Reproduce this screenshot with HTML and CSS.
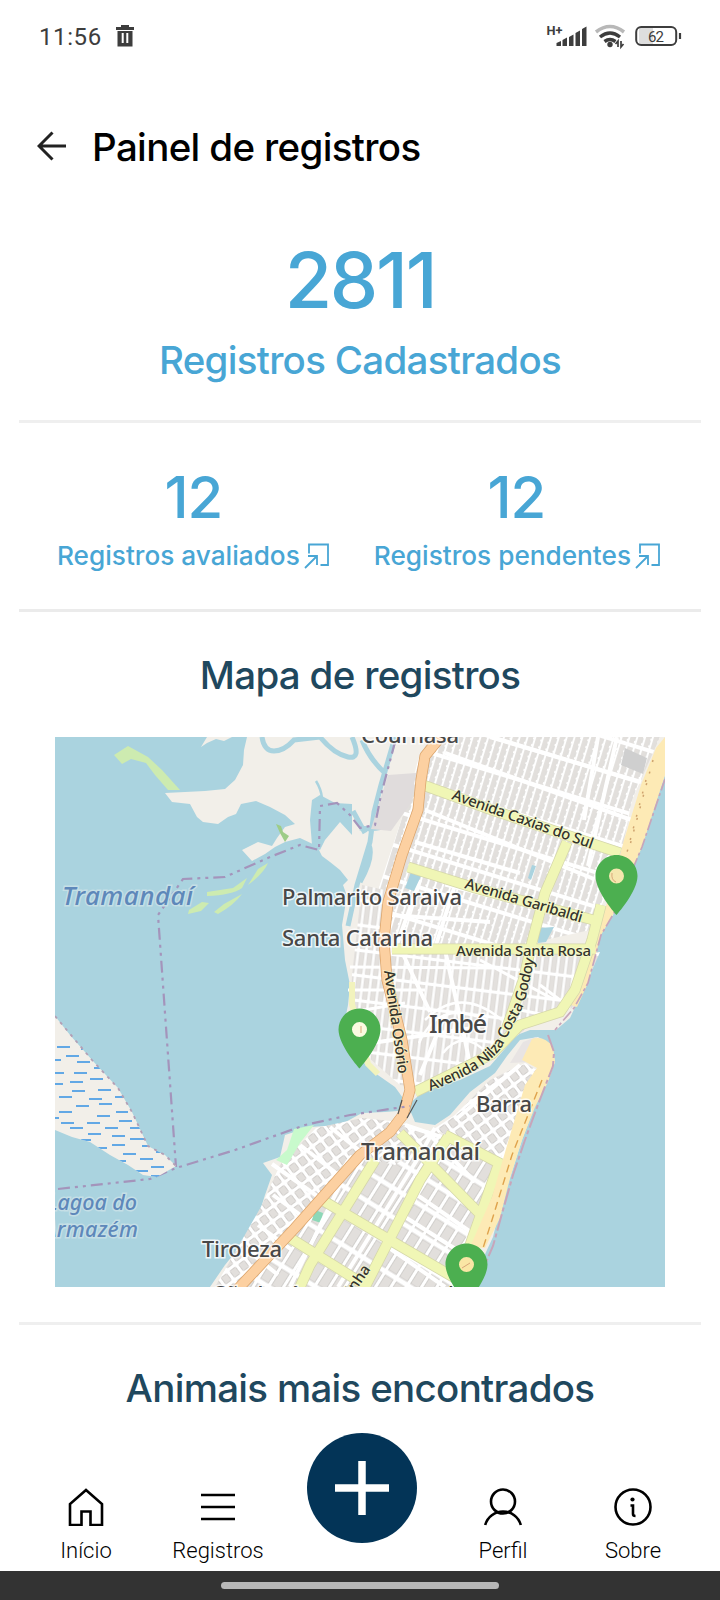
FILE: index.html
```html
<!DOCTYPE html>
<html lang="pt-BR">
<head>
<meta charset="utf-8">
<meta name="viewport" content="width=device-width, initial-scale=1">
<title>Painel de registros</title>
<link rel="stylesheet" href="styles.css">
</head>
<body>
<div class="screen">
  <div class="status">
    <span class="clock">11:56</span>
    <svg class="trash" width="20" height="22" viewBox="0 0 20 22"><path fill="#3d3d3d" d="M6 0h8v2h5v3H1V2h5zM2.500 6h15v15.500h-15z"/><path stroke="#fff" stroke-width="2" d="M7.700 8v10M12.300 8v10"/></svg>
    <svg class="signals" width="140" height="30" viewBox="545 20 140 30">
      <text x="546.500" y="34.500" class="net" textLength="16" lengthAdjust="spacingAndGlyphs">H+</text>
      <g fill="#3d3d3d"><path d="M556.500 46v-3l4.500-2v5zM562.500 46v-6l4.500-2.500v8.500zM569 46v-9l4.500-2.500v11.500zM575.500 46V33l4.500-2.500v15.500zM582 46V29l4.500-2.500V46z"/></g>
      <g fill="none" stroke-width="3.500"><path stroke="#b8b8b8" d="M596 32q14-11 28 0"/><path stroke="#3d3d3d" d="M600 37q10-8 20 0M604.500 41.500q5.500-4 11 0"/></g>
      <circle cx="610" cy="44.500" r="2.700" fill="#3d3d3d"/>
      <path d="M618 47v-6l-2.500 3M621 41v6l2.500-3" fill="none" stroke="#3d3d3d" stroke-width="1.700"/>
      <rect x="639" y="28" width="14" height="16" fill="#dedede"/>
      <rect x="636.200" y="27" width="40" height="18" rx="5" fill="none" stroke="#3d3d3d" stroke-width="2"/>
      <path d="M680 33v6" stroke="#3d3d3d" stroke-width="2.200"/>
      <text x="648" y="41.500" class="level" textLength="16">62</text>
    </svg>
  </div>

  <header class="header">
    <svg width="30" height="30" viewBox="0 0 30 30" fill="none" stroke="#222" stroke-width="3"><path d="M15.500 1.500 2 15l13.500 13.500M2 15h27"/></svg>
    <h1 class="title">Painel de registros</h1>
  </header>

  <main class="content">
    <section class="total">
      <div class="total-number">2811</div>
      <div class="total-label">Registros Cadastrados</div>
    </section>

    <section class="split">
      <div class="stat stat-done">
        <div class="stat-number">12</div>
        <div class="stat-label"><span>Registros avaliados</span><svg width="26" height="26" viewBox="0 0 26 26"><path d="M5 10.500V1.500h19v20.500h-7.500M1 25 12 14M4 13h9v9" fill="none" stroke="#48a6d5" stroke-width="1.800"/></svg></div>
      </div>
      <div class="stat stat-pending">
        <div class="stat-number">12</div>
        <div class="stat-label"><span>Registros pendentes</span><svg width="26" height="26" viewBox="0 0 26 26"><path d="M5 10.500V1.500h19v20.500h-7.500M1 25 12 14M4 13h9v9" fill="none" stroke="#48a6d5" stroke-width="1.800"/></svg></div>
      </div>
    </section>

    <section class="map-section">
      <h2 class="heading heading-map">Mapa de registros</h2>
      <svg class="map" width="610" height="550" viewBox="55 737 610 550">
        <defs>
          <pattern id="fine" width="7.500" height="33" patternUnits="userSpaceOnUse" patternTransform="rotate(17)"><rect width="7.500" height="33" fill="#fff"/><rect x="1" y="2" width="4.600" height="29" fill="#e2dfdc"/><path d="M6 2v29" stroke="#d0cecc" stroke-width=".7" stroke-dasharray="5 2"/></pattern>
          <pattern id="level" width="8" height="25" patternUnits="userSpaceOnUse" patternTransform="rotate(7)"><rect width="8" height="25" fill="#fff"/><rect x="1" y="1.500" width="5" height="21" fill="#e3e0dd" stroke="#cfcdca" stroke-width=".4"/></pattern>
          <pattern id="blocks" width="13" height="25" patternUnits="userSpaceOnUse" patternTransform="rotate(32)"><rect width="13" height="25" fill="#fff"/><rect x="1.500" y="2" width="9" height="19" fill="#e2dfdc" stroke="#cac7c4" stroke-width=".8"/></pattern>
          <pattern id="small" width="11" height="12" patternUnits="userSpaceOnUse" patternTransform="rotate(-37)"><rect width="11" height="12" fill="#fff"/><rect x="1.500" y="1.500" width="7" height="8" rx="1" fill="#e2dfdc" stroke="#cac7c4" stroke-width=".8"/></pattern>
          <path id="nilza" d="M430 1091Q492 1068 504 1043Q513 1025 524 1005L536 953"/>
          <path id="pin" fill="#4caf50" fill-rule="evenodd" d="M12 2C8.130 2 5 5.130 5 9c0 5.250 7 13 7 13s7-7.750 7-13c0-3.870-3.130-7-7-7zm0 9.500a2.500 2.500 0 1 1 0-5 2.500 2.500 0 0 1 0 5z"/>
          <clipPath id="wet"><path d="M55 1016 70 1035 92 1060 118 1088 132 1112 148 1146 165 1155 176 1166 157 1177 143 1175 128 1165 110 1155 90 1142 72 1137 55 1130z"/></clipPath>
        </defs>
        <rect x="55" y="737" width="610" height="550" fill="#aad3df"/>

        <!-- north shore and peninsula -->
        <path fill="#f2efe9" d="M201 747 207 737h25l-8 4-8-2-9 4zM247 737 244 750 243 765 235 780 225 789 205 791 185 792 165 793 172 802 190 804 197 817 203 822 218 824 228 817 236 814 241 804 256 801 270 807 285 815 295 824 285 827 277 838 272 846 258 842 242 850 252 861 265 854 275 847 285 842 300 838 317 846 322 856 330 862 340 870 348 880 343 885 347 896 342 925 345 960 350 985 348 1005 345 1020 350 1050 375 1073 395 1087 408 1105 425 1090 460 1080 490 1066 503 1051 517 1035 530 1030 556 1030 570 1018 583 990 592 965 600 935 613 915 640 845 665 775V737z"/>
        <path fill="#aad3df" d="M320 795 335 803 352 804 352 835 340 822 325 840 320 850 312 845 310 820 312 800z"/>
        <path fill="none" stroke="#aad3df" stroke-width="5" d="M262 737q2 14 12 14t20-11l26-3q14 17 28 20t4-20M353 811l12 22M362 740q8 20 24 34M395 737 381 785 374 812 370 842 357 885 348 926M405 790q-2 25-14 33t-31 5M369 845q5 12-9 37"/>
        <path fill="none" stroke="#aad3df" stroke-width="2.500" d="M316 781q5 8 6 17"/>
        <path fill="#cdebb0" d="M114 755 128 746 148 757 162 770 180 790 168 790 155 775 146 763 131 759 122 764zM207 892l26-4 14-10-5 10q-10 7-35 8zM248 885l10-16 10-6q-4 10-20 22zM189 910l13-8 7 1-8 8-13 3zM214 912l10-8 18-10q-8 11-24 20z"/>
        <path fill="#9dcc87" d="M276 824l5 2 2 6 6 4-4 6-5-9z"/>

        <!-- street grids of Imbé -->
        <path fill="url(#fine)" d="M430 737H660L632 800 618 870 590 930 500 950 430 948 360 948 378 890 408 800 418 760z"/>
        <path fill="url(#level)" d="M362 885 385 890 380 948 600 952 590 975 572 1008 540 1018 505 1045 430 1088 400 1085 360 1050 350 1020 352 975z"/>
        <path fill="#e0dcdc" d="M388 775l28-2-5 30-20 28-20-2z"/>
        <path fill="#cfcfcf" d="M625 748l22 10-4 16-22-9z"/>
        <g fill="none" stroke="#fff" stroke-width="4">
          <path d="M445 753 640 823M425 810 594 879M490 737 641 782M415 842 520 873M390 915 490 922M617 737 588 866M598 737 584 820M420 880 395 950M455 885 435 948M402 952 430 1012M445 950 465 1040M365 1044 480 1027M420 1075 445 1015M470 1065 463 1030"/>
          <path d="M350 967 500 968M348 990 425 990M352 1012 405 1003M445 885 540 909M560 864 545 900M480 960 555 1000M540 985 560 1000M520 1010 545 1015" stroke-width="3"/>
          <path d="M425 1020q35-35 77 0M419 1043q20-45 67-23M443 1053q20-25 44 0" stroke-width="2.500"/>
        </g>
        <path fill="#aad3df" d="M411 872l11 2-8 17-9-3zM539 928l15-1-8 15-8 1zM532 865l4 1-5 14-3-2z"/>

        <!-- beach of Imbé -->
        <path fill="#fdeab5" d="M665 737 656 748 641 785 624 840 611 890 600 925 586 970 571 1005 577 1007 588 983 601 935 614 913 642 847 665 775z"/>
        <path fill="none" stroke="#c7a5ba" stroke-width="1.700" stroke-dasharray="12 3 3 3" d="M665 779 642 847 614 913 601 935 588 983 574 1008 555 1030"/>
        <path fill="none" stroke="#cfa36e" stroke-width="1.500" stroke-dasharray="2 10" d="M653 760 630 845M646 780 625 860"/>

        <!-- collector roads of Imbé -->
        <g fill="none" stroke="#d5d7aa" stroke-width="11"><path d="M423 785 492 810 620 853M408 867 475 888 597 921M392 949H595M567 842 545 893 532 942 524 978 506 1030M601 905 592 940 575 990 560 1012 520 1025 492 1054 415 1092"/></g>
        <g fill="none" stroke="#f0f6b5" stroke-width="9.500"><path d="M423 785 492 810 620 853M408 867 475 888 597 921M392 949H595M567 842 545 893 532 942 524 978 506 1030M601 905 592 940 575 990 560 1012 520 1025 492 1054 415 1092"/></g>
        <path fill="none" stroke="#f2f3bd" stroke-width="6" d="M352 982v22l16 60 10 10"/>

        <!-- Tramandaí -->
        <path fill="#f2efe9" d="M210 1287 225 1265 245 1240 257 1220 265 1195 272 1175 263 1163 280 1157 285 1135 310 1127 340 1125 362 1113 385 1112 410 1110 415 1122 435 1125 450 1115 470 1092 495 1073 507 1056 520 1040 538 1037 552 1045 555 1062 548 1080 535 1105 522 1140 510 1178 500 1208 493 1237 480 1265 475 1287z"/>
        <path fill="url(#blocks)" d="M222 1287 250 1243 267 1195 278 1170 290 1160 330 1127 400 1125 435 1132 505 1160 485 1200 468 1250 455 1287z"/>
        <path fill="url(#small)" d="M316 1128 362 1118 400 1122 428 1133 455 1115 490 1080 525 1063 540 1072 505 1160 440 1132 395 1165 350 1155 290 1235 245 1287 215 1287 262 1205 280 1165z"/>
        <path fill="#c8facc" d="M294 1129 314 1125 300 1143 287 1165 276 1160 287 1150z"/>
        <path fill="#8dd8b8" d="M315 1210l8 3-2 10-9-3z"/>
        <g fill="none" stroke="#fff" stroke-width="4"><path d="M272 1164 317 1196M300 1145 345 1180M330 1127 375 1163M273 1195 310 1222M258 1225 292 1250M245 1248 278 1275M405 1125 480 1150M435 1128 420 1155 338 1287M410 1190 475 1235M402 1215 465 1255M385 1245 445 1287M340 1185 290 1287M540 1070 500 1165M455 1120 520 1065M430 1135 475 1182"/></g>
        <g fill="none"><path stroke="#d5d7aa" stroke-width="11" d="M400 1133 480 1214M448 1137 420 1180 365 1287M445 1135 503 1165M375 1160 310 1265 300 1287M322 1200 400 1246 460 1281M290 1238 368 1287M500 1160 470 1245"/><path stroke="#f0f6b5" stroke-width="9.500" d="M400 1133 480 1214M448 1137 420 1180 365 1287M445 1135 503 1165M375 1160 310 1265 300 1287M322 1200 400 1246 460 1281M290 1238 368 1287M500 1160 470 1245"/></g>
        <path fill="#e8e4e3" d="M510 1063 523 1042 536 1037 530 1062z"/>
        <path fill="#fdeab5" d="M532 1039q12-4 21 8l2 15-7 20-13 25-13 33-12 38-10 40-15 30-15-1 22-50 16-55 17-57 12-17-15-8z"/>
        <path fill="none" stroke="#dfa24c" stroke-width="1.400" stroke-dasharray="8 5" d="M542 1080 512 1155 492 1220 476 1270"/>
        <path fill="none" stroke="#c7a5ba" stroke-width="2" stroke-dasharray="17 3 4 3" d="M548 1035l6 17-1 14-14 36-14 38-12 35-10 35-10 36-13 30"/>

        <!-- trunk road -->
        <g fill="none" stroke-linejoin="round"><path stroke="#dba46b" stroke-width="11" d="M442 735 425 756 421 780 418 810 402 855 388 902 384 940 387 980 402 1040 410 1090 403 1115 390 1132 360 1155 295 1228 235 1292"/><path stroke="#fcd0a1" stroke-width="9.500" d="M442 735 425 756 421 780 418 810 402 855 388 902 384 940 387 980 402 1040 410 1090 403 1115 390 1132 360 1155 295 1228 235 1292"/></g>
        <path fill="none" stroke="#555" stroke-width="1.200" d="M417 1100 407 1118M402 1100 398 1114"/>

        <!-- municipal boundaries -->
        <g fill="none" stroke="#a494bb" stroke-width="2.200" stroke-dasharray="12 5 3 5 3 5"><path d="M395 742 381 795 375 825 360 828 350 815 337 803 320 806 319 850 300 845 270 857 225 877 183 879 158 915 176 1167M58 1189 150 1179 176 1168 235 1150 305 1125 350 1115 410 1106"/></g>

        <!-- wetland -->
        <path fill="#f2efe9" d="M55 1016 70 1035 92 1060 118 1088 132 1112 148 1146 165 1155 176 1166 157 1177 143 1175 128 1165 110 1155 90 1142 72 1137 55 1130z"/>
        <path clip-path="url(#wet)" stroke="#62a8e5" stroke-width="2.100" d="M57 1047h13M81 1049h12M66 1056h13M50 1060h11M77 1062h13M94 1068h12M52 1073h12M74 1073h13M90 1079h13M52 1084h11M70 1082h13M98 1090h13M72 1091h13M59 1097h13M89 1099h13M115 1097h12M76 1106h13M99 1104h13M59 1112h13M97 1116h13M116 1112h12M50 1118h9M61 1123h13M87 1123h13M119 1121h13M70 1128h13M105 1128h13M130 1128h10M88 1134h13M112 1136h13M81 1140h10M130 1139h15M112 1145h13M96 1148h11M142 1146h10M123 1154h13M156 1152h8M118 1161h8M140 1159h13M151 1167h13M135 1171h13M151 1176h9"/>
        <path fill="none" stroke="#b39fb5" stroke-width="1.800" stroke-dasharray="3 5" d="M55 1016 92 1060 118 1088 132 1112 148 1146 165 1155 176 1166"/>

        <g class="water-name">
          <text x="62" y="905" font-size="26" textLength="131">Tramandaí</text>
          <text x="47" y="1210" font-size="21.500" textLength="90">Lagoa do</text>
          <text x="44" y="1237" font-size="21.500" textLength="94">Armazém</text>
        </g>
        <g class="place">
          <text x="361" y="743" textLength="98">Courhasa</text>
          <text x="282" y="905" textLength="180">Palmarito Saraiva</text>
          <text x="282" y="946" textLength="151">Santa Catarina</text>
          <text x="429" y="1033" font-size="25" textLength="58">Imbé</text>
          <text x="476" y="1112" textLength="56">Barra</text>
          <text x="361" y="1160" font-size="24" textLength="119">Tramandaí</text>
          <text x="202" y="1257" textLength="80">Tiroleza</text>
          <text x="214" y="1302" textLength="86">São José</text>
        </g>
        <g class="street">
          <text transform="translate(451 799) rotate(19.500)" textLength="149">Avenida Caxias do Sul</text>
          <text transform="translate(464 888) rotate(16.500)" textLength="122">Avenida Garibaldi</text>
          <text x="456" y="956" textLength="135">Avenida Santa Rosa</text>
          <text transform="translate(384 971) rotate(82)" textLength="104">Avenida Osório</text>
          <text><textPath href="#nilza" textLength="180">Avenida Nilza Costa Godoy</textPath></text>
          <text transform="translate(348 1302) rotate(-55)">ainha</text>
          <text x="446" y="1296">A</text>
        </g>
        <circle cx="616" cy="876" r="8.500" fill="#f5e7ae"/><circle cx="359.500" cy="1030" r="8.500" fill="#fafae0"/><circle cx="466" cy="1265" r="8.500" fill="#fae6a5"/>
        <path d="M612 873q-1 7 4 9M361 1026v7M462 1268l8-5" stroke="#d9a779" fill="none"/>
        <g class="pins">
          <use href="#pin" transform="translate(580.500 849) scale(3)"/>
          <use href="#pin" transform="translate(323.500 1002.500) scale(3)"/>
          <use href="#pin" transform="translate(430.500 1237.500) scale(3)"/>
        </g>
      </svg>
    </section>

    <section class="animals"><h2 class="heading heading-animals">Animais mais encontrados</h2></section>
  </main>

  <nav class="tabs">
    <a class="tab tab-home"><svg width="36" height="38" viewBox="0 0 36 38"><path d="M2 37V16L18 2l16 14v21H22.500V23.500h-9V37z"/></svg><span>Início</span></a>
    <a class="tab tab-list"><svg width="36" height="38" viewBox="0 0 36 38"><path d="M1 7h34M1 19h34M1 31h34"/></svg><span>Registros</span></a>
    <a class="fab" aria-label="Adicionar"><svg width="54" height="54" viewBox="0 0 54 54"><path d="M27 0v54M0 27h54"/></svg></a>
    <a class="tab tab-user"><svg width="38" height="38" viewBox="0 0 38 38"><circle cx="19" cy="13.500" r="12"/><path d="M1.200 37a18.500 18.500 0 0 1 35.600 0"/></svg><span>Perfil</span></a>
    <a class="tab tab-info"><svg width="38" height="38" viewBox="0 0 38 38"><circle cx="19" cy="19" r="17.500"/><path d="M16.500 17.500H19V26q0 2 2.500 2"/><circle class="dot" cx="18.500" cy="11.500" r="2.100"/></svg><span>Sobre</span></a>
  </nav>
  <div class="system"><div class="handle"></div></div>
</div>
</body>
</html>
```
FILE: styles.css
```css
* { box-sizing: border-box; }
body { margin: 0; background: #fff; font-family: Inter, "Liberation Sans", sans-serif; }
h1, h2 { margin: 0; font-weight: 500; }
svg { display: block; flex: none; }
.screen { width: 720px; height: 1600px; display: flex; flex-direction: column; overflow: hidden; position: relative; }
.status { height: 72px; display: flex; align-items: center; padding-left: 39px; font-family: Roboto, sans-serif; color: #3d3d3d; }
.clock { font-size: 24px; width: 62px; letter-spacing: .6px; padding-top: 2px; }
.trash { margin-left: 14px; }
.signals { margin: -2px 35px 0 auto; }
.net { font: 700 12px Roboto, sans-serif; fill: #3d3d3d; }
.level { font: 400 15px Roboto, sans-serif; fill: #3d3d3d; }
.header { height: 148px; display: flex; align-items: center; gap: 25px; padding-left: 37px; }
.title { font-size: 38.500px; letter-spacing: -.65px; line-height: 40px; padding-top: 1px; color: #000; white-space: nowrap; }
.content { padding: 0 19px; flex: 1; min-height: 0; color: #48a6d5; text-align: center; font-weight: 500; }
.total { height: 203px; padding-top: 20px; border-bottom: 3px solid #efefef; }
.total-number { font-size: 77px; line-height: 80px; letter-spacing: -2.300px; font-weight: 550; }
.total-label { font-size: 38.500px; letter-spacing: -.7px; line-height: 40px; margin-top: 20px; white-space: nowrap; }
.split { height: 189px; padding: 44px 40px 0 38px; display: flex; justify-content: space-between; border-bottom: 3px solid #ebebeb; }
.stat-number { font-size: 58px; line-height: 60px; letter-spacing: -1px; font-weight: 550; }
.stat-pending .stat-number { padding-right: 2px; }
.stat-label { display: flex; align-items: center; gap: 4px; margin-top: 15px; font-size: 26.200px; line-height: 28px; white-space: nowrap; }
.heading { color: #1f485e; font-size: 38.500px; letter-spacing: -.7px; line-height: 40px; white-space: nowrap; }
.map-section { height: 713px; padding-top: 43px; border-bottom: 3px solid #efefef; }
.map { margin: 42px 0 0 36px; overflow: hidden; }
.animals { padding-top: 43px; }
.water-name { font-family: "Noto Sans", sans-serif; font-style: italic; fill: #5e88ba; stroke: #c5dfe6; stroke-width: 3px; paint-order: stroke; }
.place { font-family: "Noto Sans", sans-serif; font-size: 22px; fill: #484848; stroke: #fffc; stroke-width: 3px; paint-order: stroke; }
.street { font-family: "Noto Sans", sans-serif; font-size: 15px; fill: #34342c; stroke: #f7facfaa; stroke-width: 2px; paint-order: stroke; }
.tabs { height: 111px; position: relative; background: #fff; display: grid; grid-template-columns: 48px 76px 188px 135px 112px 148px; padding-top: 28px; font-family: Roboto, sans-serif; font-weight: 300; font-size: 22px; color: #000; }
.tab { display: flex; flex-direction: column; align-items: center; gap: 11px; line-height: 28px; }
.tab svg { fill: none; stroke: #000; stroke-width: 2.600px; }
.tab .dot { fill: #000; stroke: none; }
.tab-home { grid-column: 2; }
.tab-list { grid-column: 3; }
.tab-user { grid-column: 5; }
.tab-info { grid-column: 6; }
.fab { position: absolute; left: 307px; top: -27px; width: 110px; height: 110px; border-radius: 50%; background: #033457; display: flex; align-items: center; justify-content: center; }
.fab svg { fill: none; stroke: #fff; stroke-width: 7.500px; }
.system { height: 29px; flex: none; background: #333; padding: 11px 0 0 221px; }
.handle { width: 278px; height: 7px; border-radius: 4px; background: #b8b8b8; }
```
